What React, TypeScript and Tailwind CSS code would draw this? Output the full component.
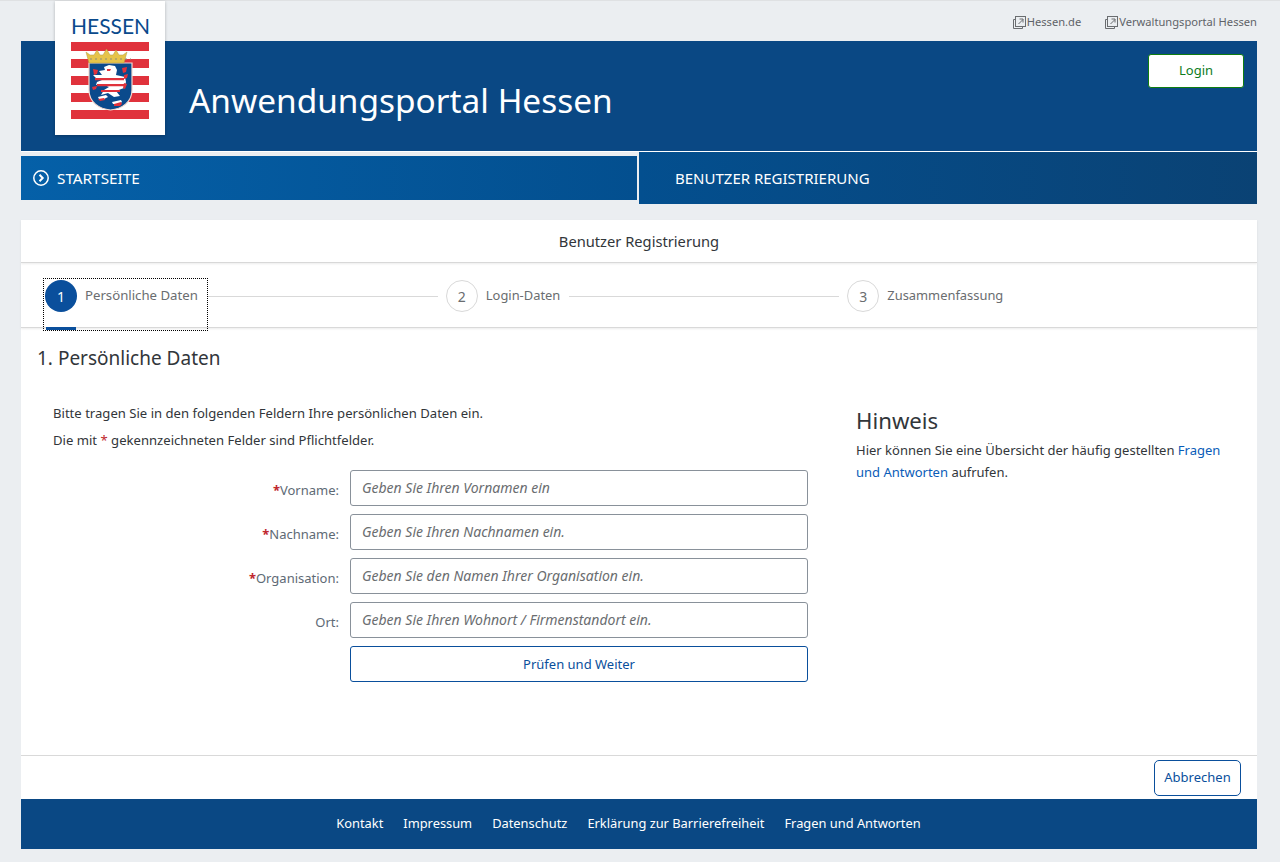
import React from "react";

const font = { fontFamily: '"Noto Sans", "Open Sans", sans-serif' };

function ExternalIcon() {
  return (
    <svg width="13" height="13" viewBox="0 0 13 13" fill="none" stroke="#6a6d70" strokeWidth="1" className="mr-px">
      <path d="M2.5 3.5H.5v9h9v-2" />
      <rect x="2.5" y=".5" width="10" height="10" />
      <path d="M5.5 8 10 3.5M6.5 3h3.5v3.5" />
    </svg>
  );
}

function Logo() {
  return (
    <div className="absolute left-[34px] top-[-40px] w-[110px] h-[134px] bg-white shadow-[0_1px_3px_rgba(0,0,0,0.25)] flex flex-col items-center pt-[13px]">
      <div className="text-[#0a4a8c] text-[21px] leading-[24px] font-['Lato',sans-serif] w-[78px] text-center">
        HESSEN
      </div>
      <svg width="78" height="78" viewBox="0 0 78 78" className="mt-[4px]">
        {[0, 17, 34, 51, 68].map((y) => (
          <rect key={y} x="0" y={y} width="78" height="9" fill="#e0323c" />
        ))}
        {/* shield */}
        <path d="M18 21h43v27c0 12-10 19-21.500 20C28 67 18 60 18 48z" fill="#0a4a8c" stroke="#f3d9d0" strokeWidth="1.200" />
        {/* lion */}
        <path d="M33 25l5-2 6 1 2 4-1 5 9 2 1 5-2 6-8 3 4 5-6 1-6-4-7 2 3-5 5-3-7-3-6 1 1-3 5-2-6-2-3-3 9 0-3-4 6-1z" fill="#fff" />
        <path d="M27 55l8-2 2 2-4 2h-5zM41 60l9-2 1 2-3 2h-6z" fill="#fff" />
        <path d="M24 36h29v2.200H24zM26 42h27v2.200H26zM30 48h19v2H30z" fill="#e0323c" />
        <path d="M22 27l5 1-1 4-3 1zM51 26l5-1-1 5-3 1zM53 33l4-1-1 4-3 1zM53 41l3 1-2 5-2-1zM21 45l5-1-1 3-3 1zM27 57l6-1 1 2-5 1zM43 62l7-2 1 2-2 2h-6zM36 27h4l-1 2h-3z" fill="#e0323c" />
        {/* crown */}
        <path d="M15 10l4 3 4 0 3-5 3 5h3l3.500-6 3.500 6h3l3-5 3 5h4l4-3-3 11H18z" fill="#e6c34a" stroke="#b09a45" strokeWidth=".5" />
        <path d="M19 17h41" stroke="#8a8f80" strokeWidth="1.200" strokeDasharray="2 3" />
      </svg>
    </div>
  );
}

function Step({ n, label, active }: { n: number; label: string; active?: boolean }) {
  return (
    <div className="flex items-center gap-2 shrink-0">
      <span
        className={
          active
            ? "w-8 h-8 rounded-full bg-[#0a4f9c] text-white text-[14px] flex items-center justify-center"
            : "w-8 h-8 rounded-full border border-[#d9d9d9] bg-white text-[#6a6d70] text-[14px] flex items-center justify-center"
        }
      >
        {n}
      </span>
      <span className={active ? "text-[13.2px] text-[#6a6d70]" : "text-[12.9px] text-[#6a6d70]"}>{label}</span>
    </div>
  );
}

function Field({ label, required, placeholder }: { label: string; required?: boolean; placeholder: string }) {
  return (
    <div className="flex items-center h-9">
      <div className="w-[313px] pr-[11px] pt-[6px] text-right text-[13px] text-[#5e6a75]">
        {required && <span className="text-[#c0262d] font-bold">*</span>}
        {label}
      </div>
      <input
        placeholder={placeholder}
        className="w-[458px] h-9 rounded-[3px] border border-[#89919a] bg-white px-[11px] pb-[2px] text-[14px] italic placeholder:text-[#6a6d70] outline-none"
      />
    </div>
  );
}

export default function App() {
  return (
    <div className="min-h-[862px] bg-[#ebeef1] border-t border-[#dfe1e3] pl-[21px] pr-[23px] pb-[13px]" style={font}>
      {/* top links */}
      <div className="h-[40px] flex items-start justify-end pt-[13px] text-[11.15px] text-[#5f6368] gap-[24px]">
        <a className="flex items-center">
          <ExternalIcon />
          Hessen.de
        </a>
        <a className="flex items-center">
          <ExternalIcon />
          Verwaltungsportal Hessen
        </a>
      </div>

      {/* header */}
      <div className="relative h-[110px] bg-[#0a4884] flex justify-between">
        <Logo />
        <h1 className="ml-[168px] mt-[35px] text-[33.4px] leading-[48px] text-white">Anwendungsportal Hessen</h1>
        <button className="mt-[13px] mr-[13px] w-[96px] h-[34px] rounded-[3px] bg-white border border-[#0f7d0f] text-[13px] text-[#0e7c1e]">
          Login
        </button>
      </div>

      {/* nav */}
      <div className="flex items-start gap-[2px] border-t border-white h-[54px]">
        <div className="mt-1 w-[616px] h-[44px] flex items-center gap-2 pl-3 text-white text-[15.3px] bg-gradient-to-r from-[#0560a8] to-[#034f8f]">
          <svg width="16" height="16" viewBox="0 0 16 16" fill="none" stroke="#fff">
            <circle cx="8" cy="8" r="7.2" strokeWidth="1.5" />
            <path d="M6.5 4.8 9.700 8l-3.200 3.200" strokeWidth="2" />
          </svg>
          STARTSEITE
        </div>
        <div className="flex-1 h-[52px] flex items-center pl-9 text-white text-[15px] bg-gradient-to-r from-[#034f8f] to-[#0a4274]">
          BENUTZER REGISTRIERUNG
        </div>
      </div>

      {/* page */}
      <div className="mt-[15px] bg-white">
        <div className="h-[43px] flex items-center justify-center text-[14.7px] text-[#32363a] border-b border-[#d9d9d9] shadow-[0_1px_2px_rgba(0,0,0,0.08)]">
          Benutzer Registrierung
        </div>
        <div className="relative h-[65px] flex items-center pl-6 pt-[2px] border-b border-[#d9d9d9] shadow-[0_1px_2px_rgba(0,0,0,0.08)]">
          <div className="relative">
            <Step n={1} label="Persönliche Daten" active />
            <span className="absolute left-[-2px] top-[-2px] w-[165px] h-[53px] border border-dotted border-black" />
            <span className="absolute left-[1px] top-[47px] w-[30px] h-[3px] bg-[#0a4f9c]" />
          </div>
          <span className="ml-[10px] mr-2 w-[230px] h-px bg-[#d9d9d9]" />
          <Step n={2} label="Login-Daten" />
          <span className="ml-[9px] mr-2 w-[270px] h-px bg-[#d9d9d9]" />
          <Step n={3} label="Zusammenfassung" />
        </div>

        <div className="h-[427px] px-4">
          <h2 className="pt-[16px] text-[19px] leading-[28px] text-[#32363a]">1. Persönliche Daten</h2>
          <div className="flex mt-[32px]">
            <div className="w-[819px]">
              <p className="pl-4 text-[13.1px] leading-[18px] text-[#32363a]">
                Bitte tragen Sie in den folgenden Feldern Ihre persönlichen Daten ein.
              </p>
              <p className="pl-4 mt-[9px] text-[13.1px] leading-[18px] text-[#32363a]">
                Die mit <span className="text-[#c0262d]">*</span> gekennzeichneten Felder sind Pflichtfelder.
              </p>
              <div className="mt-[21px] flex flex-col gap-2">
                <Field label="Vorname:" required placeholder="Geben Sie Ihren Vornamen ein" />
                <Field label="Nachname:" required placeholder="Geben Sie Ihren Nachnamen ein." />
                <Field label="Organisation:" required placeholder="Geben Sie den Namen Ihrer Organisation ein." />
                <Field label="Ort:" placeholder="Geben Sie Ihren Wohnort / Firmenstandort ein." />
                <div className="pl-[313px]">
                  <button className="w-[458px] h-9 rounded-[3px] border border-[#0a4f9c] pt-px text-[13px] text-[#0a4f9c] bg-white">
                    Prüfen und Weiter
                  </button>
                </div>
              </div>
            </div>
            <div className="w-[380px] pt-[2px]">
              <h3 className="text-[22.2px] leading-[30px] mb-[3px] text-[#32363a]">Hinweis</h3>
              <p className="text-[13px] leading-[22px] text-[#32363a]">
                Hier können Sie eine Übersicht der häufig gestellten{" "}
                <a className="text-[#0a5cb8]">Fragen und Antworten</a> aufrufen.
              </p>
            </div>
          </div>
        </div>

        <div className="h-[44px] border-t border-[#d9d9d9] flex items-center justify-end pr-4">
          <button className="w-[87px] h-9 rounded-[5px] border border-[#0a4f9c] pt-px text-[13px] text-[#0a4f9c] bg-white">
            Abbrechen
          </button>
        </div>
      </div>

      {/* footer */}
      <div className="h-[50px] bg-[#0a4884] flex items-center justify-center gap-5 pr-[21px] text-[12.85px] text-white">
        <a>Kontakt</a>
        <a>Impressum</a>
        <a>Datenschutz</a>
        <a>Erklärung zur Barrierefreiheit</a>
        <a>Fragen und Antworten</a>
      </div>
    </div>
  );
}
